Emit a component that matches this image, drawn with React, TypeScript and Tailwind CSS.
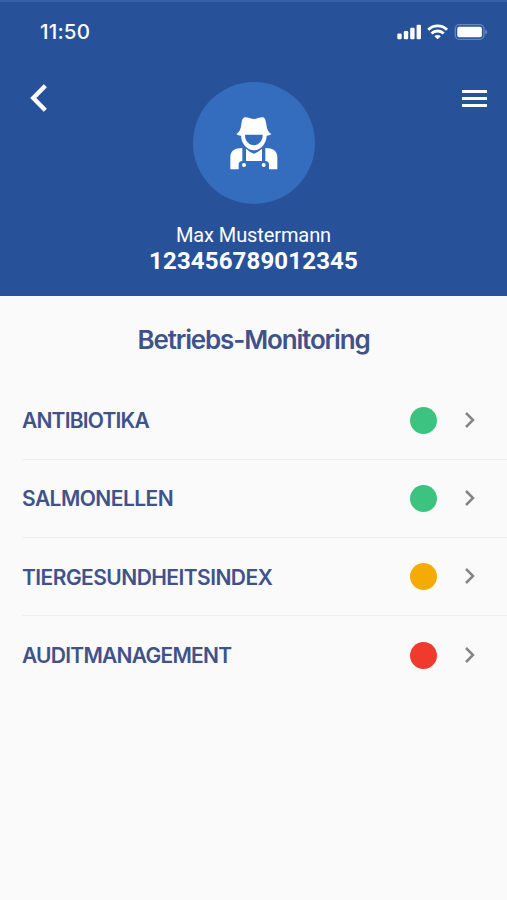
const FONT_UI = "font-['Inter','Liberation_Sans',sans-serif]";
const FONT_PROFILE = "font-['Roboto','Liberation_Sans',sans-serif]";

interface MonitoringItem {
  label: string;
  dot: string;
  tracking: string;
}

const ITEMS: MonitoringItem[] = [
  { label: 'ANTIBIOTIKA', dot: 'bg-[#3dc380]', tracking: 'tracking-[-0.8px]' },
  { label: 'SALMONELLEN', dot: 'bg-[#3dc380]', tracking: 'tracking-[-0.55px]' },
  { label: 'TIERGESUNDHEITSINDEX', dot: 'bg-[#f4ac05]', tracking: 'tracking-[-0.55px]' },
  { label: 'AUDITMANAGEMENT', dot: 'bg-[#f13a2e]', tracking: 'tracking-[-0.75px]' },
];

function StatusIcons() {
  return (
    <svg width="91" height="16" viewBox="0 0 91 16" fill="#fff" aria-hidden="true">
      {/* Signal */}
      <rect x="0.3" y="9.6" width="4.4" height="5.6" rx="1.2" />
      <rect x="6.8" y="7" width="4.4" height="8.2" rx="1.2" />
      <rect x="13.2" y="3.8" width="4.4" height="11.4" rx="1.2" />
      <rect x="19.6" y="0.8" width="4.4" height="14.4" rx="1.2" />
      {/* Wifi */}
      <g fill="none" stroke="#fff" strokeWidth="2.9">
        <path d="M31.2 5.7a13.4 13.4 0 0 1 18.8 0" />
        <path d="M34.5 9.5a8.7 8.7 0 0 1 12.2 0" />
      </g>
      <path d="M37.4 12.2a4.6 4.6 0 0 1 6.4 0l-3.2 3.1z" />
      {/* Battery */}
      <rect x="58.3" y="0.7" width="28.6" height="14.6" rx="4" fill="none" stroke="#fff" strokeOpacity="0.3" strokeWidth="1.3" />
      <rect x="60.3" y="2.7" width="24.6" height="10.6" rx="1.8" />
      <path d="M88.3 5.4v5.2c1-.4 1.7-1.4 1.7-2.6s-.7-2.2-1.7-2.6z" fillOpacity="0.35" />
    </svg>
  );
}

function Farmer() {
  return (
    <svg className="mt-[35px]" width="48" height="53" viewBox="45 36 144 159" fill="#fff" aria-hidden="true">
      <path
        fillRule="evenodd"
        d="M64 87C73 82 77 74 79 58C81 43 84 37 91 37C99 37 108 42 117 42C125 42 133 37 142 37C149 37 152 44 154 58C156 74 160 82 169 87C165 90 160 92 155 92C154 115 139 134 117 136C94 134 79 115 78 92C73 92 68 90 64 87ZM90 89V92C90 107 102 120 117 121C131 120 143 107 143 92V89Z"
      />
      <path d="M82 129V168Q71 168 71 179V193H46V157C46 138 59 129 82 129Z" />
      <path d="M151 129V168Q162 168 162 179V193H187V157C187 138 174 129 151 129Z" />
      <path d="M93 131Q103 141 117 146Q130 141 141 131V168H93Z" />
      <circle cx="87" cy="180" r="6" />
      <circle cx="146" cy="180" r="6" />
    </svg>
  );
}

function Header() {
  return (
    <header className="h-[296px] border-t-2 border-[#3961a7] bg-[#27529a] text-white">
      <div className="flex h-[60px] items-center justify-between pr-[19px] pl-[40px]">
        <span className="text-[20.5px] leading-none font-medium tracking-[0.2px]">11:50</span>
        <StatusIcons />
      </div>

      <div className="flex h-[142px] items-start justify-between pr-[20px] pl-[30px]">
        <button aria-label="Zurück" className="mt-[22px] w-[25px]">
          <svg width="18" height="28" viewBox="0 0 18 28" fill="none" stroke="#fff" strokeWidth="4.4">
            <path d="M15.3 1.8 3.3 14l12 12.2" />
          </svg>
        </button>
        <div className="mt-[20px] -ml-[9px] flex size-[122px] justify-center rounded-full bg-[#346dbe]">
          <Farmer />
        </div>
        <button aria-label="Menü" className="mt-[27.5px] flex w-[25px] flex-col gap-[4px]">
          <span className="h-[3px] w-full bg-white" />
          <span className="h-[3px] w-full bg-white" />
          <span className="h-[3px] w-full bg-white" />
        </button>
      </div>

      <div className={`mt-[19px] text-center ${FONT_PROFILE}`}>
        <p className="text-[20px] leading-[25px] tracking-[-0.1px]">Max Mustermann</p>
        <p className="text-[24px] leading-[26px] font-bold tracking-[0.15px]">123456789012345</p>
      </div>
    </header>
  );
}

function MonitoringRow({ item, last }: { item: MonitoringItem; last: boolean }) {
  return (
    <li className={`ml-[22px] flex h-[78.2px] items-center pr-[31px] ${last ? '' : 'border-b border-[#efeff1]'}`}>
      <span className={`flex-1 pt-[0.5px] text-[21px] leading-none font-semibold ${item.tracking}`}>{item.label}</span>
      <span className={`size-[27px] rounded-full ${item.dot}`} />
      <svg className="mb-px ml-[27px]" width="12" height="18" viewBox="0 0 12 18" fill="none" stroke="#858585" strokeWidth="2.5">
        <path d="M2 2l7 7-7 7" />
      </svg>
    </li>
  );
}

export default function App() {
  return (
    <div className={`h-[900px] w-[507px] overflow-hidden bg-[#fafafa] ${FONT_UI}`}>
      <Header />
      <main className="pt-[28px] text-[#41528a]">
        <h1 className="text-center text-[26px] leading-[32px] font-semibold tracking-[-1.15px]">Betriebs-Monitoring</h1>
        <ul className="mt-[25.9px]">
          {ITEMS.map((item, i) => (
            <MonitoringRow key={item.label} item={item} last={i === ITEMS.length - 1} />
          ))}
        </ul>
      </main>
    </div>
  );
}
